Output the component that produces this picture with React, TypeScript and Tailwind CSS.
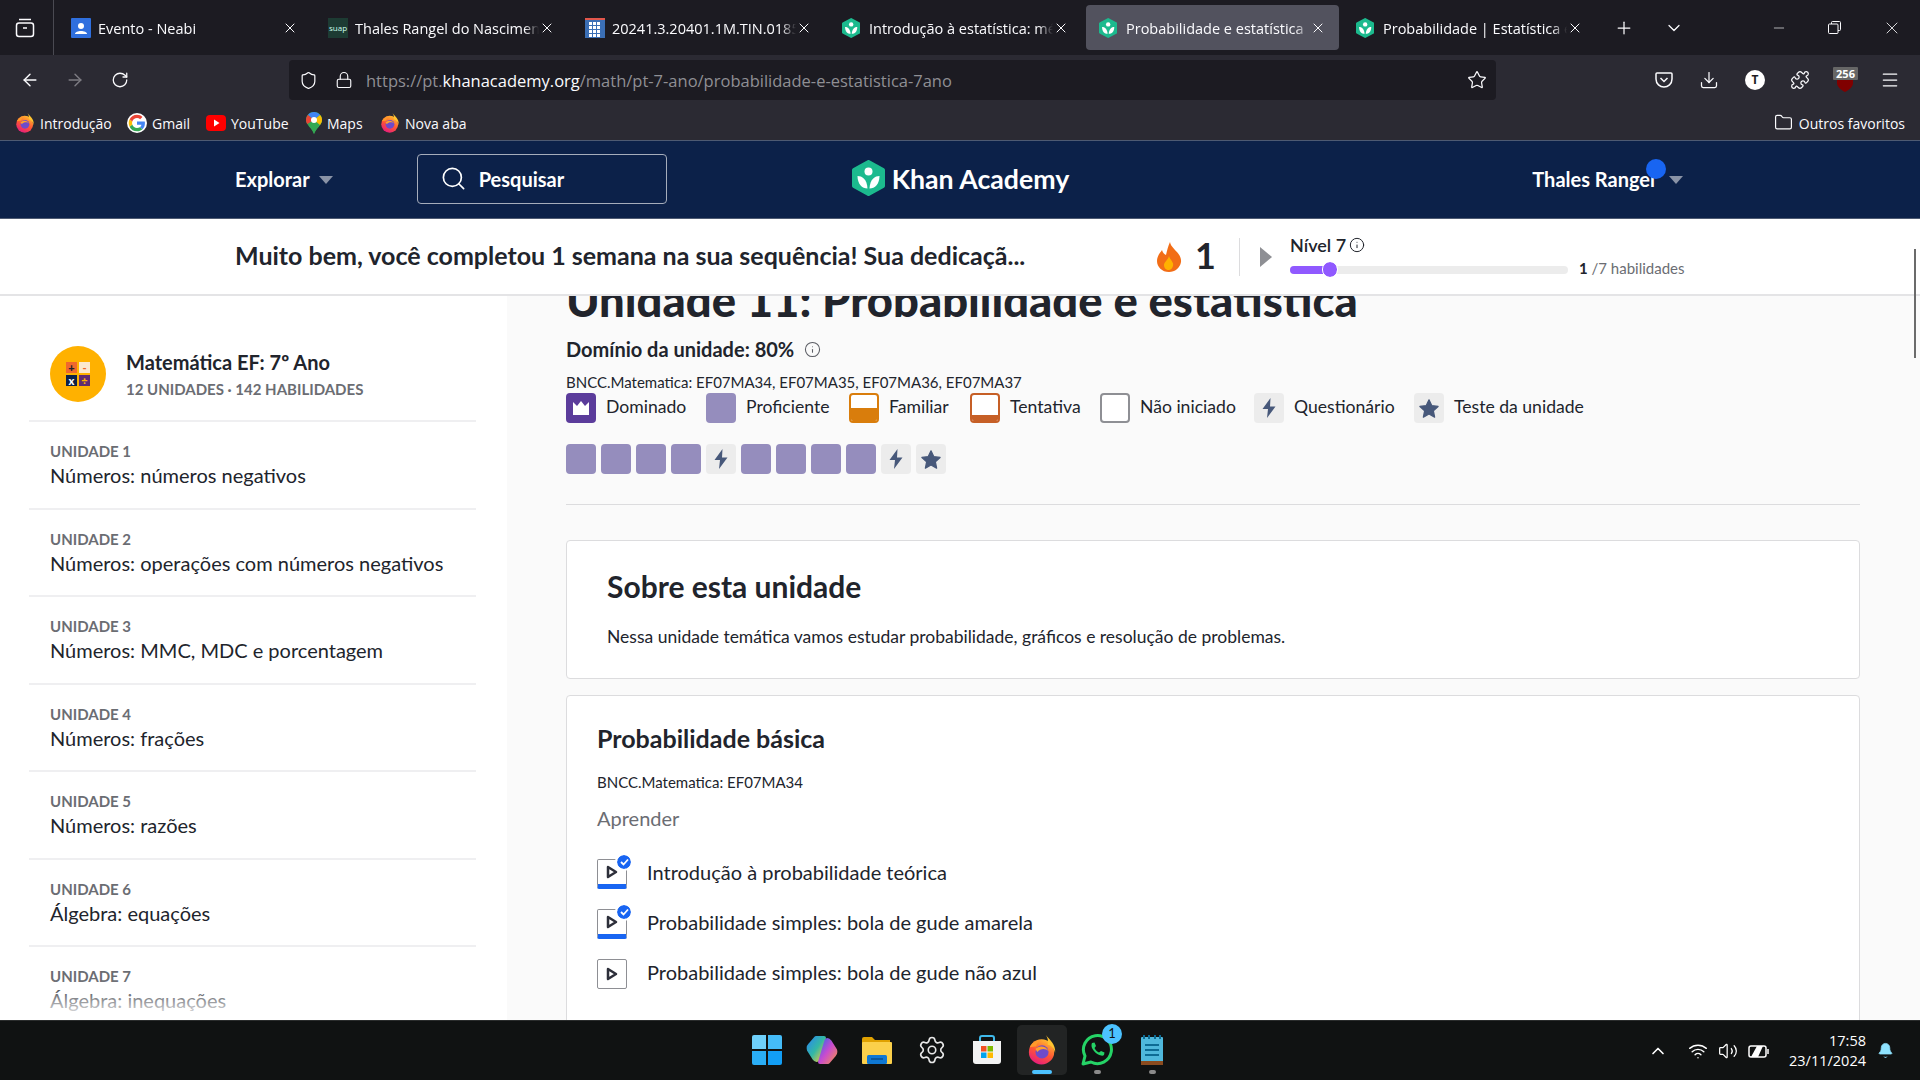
import React from "react";
import { ArrowLeft, ArrowRight, RotateCw, Shield, Lock, Star, Download, Puzzle, Menu, X, Plus, ChevronDown, ChevronUp, Minus, Search, Info, Folder, Wifi, Volume2, Bell, Settings } from "lucide-react";

const Hex = ({ s = 20 }: { s?: number }) => (
  <svg width={(s * 33) / 36} height={s} viewBox="0 0 33 36" className="shrink-0">
    <path d="M16.500 2 L31 10 V26 L16.500 34 L2 26 V10 Z" fill="#1cba8e" stroke="#1cba8e" strokeWidth="4" strokeLinejoin="round" />
    <circle cx="16.500" cy="11.500" r="4" fill="#fff" />
    <path d="M5.500 16 C10 16 15 19 15.500 28.500 C10 28.500 5.500 24 5.500 16 Z" fill="#fff" />
    <path d="M27.500 16 C23 16 18 19 17.500 28.500 C23 28.500 27.500 24 27.500 16 Z" fill="#fff" />
  </svg>
);

const Firefox = ({ s = 20 }: { s?: number }) => (
  <svg width={s} height={s} viewBox="0 0 32 32" className="shrink-0">
    <defs>
      <linearGradient id="ffa" x1="0.7" y1="0" x2="0.2" y2="1">
        <stop offset="0" stopColor="#ffbd2e" />
        <stop offset="0.5" stopColor="#ff5634" />
        <stop offset="1" stopColor="#e31587" />
      </linearGradient>
    </defs>
    <circle cx="15.500" cy="18" r="13.500" fill="url(#ffa)" />
    <path d="M20 0 C24 5 31 10 30 19 C29 14 26 11 22 10 C23 6 22 3 20 0 Z" fill="#ffc430" />
    <path d="M3 13 C5 8 10 5 16 6 C12 7 10 9 10 12 Z" fill="#ff9a2a" />
    <circle cx="16" cy="18" r="7" fill="#6e4bc9" />
    <path d="M9 15 C12 11 20 11 23 17 C20 14 14 14 11 18 Z" fill="#ffa02c" />
  </svg>
);

const Google = () => (
  <svg width="20" height="20" viewBox="0 0 48 48" className="shrink-0">
    <circle cx="24" cy="24" r="24" fill="#fff" />
    <path fill="#4285F4" d="M43 24.500c0-1.400-.1-2.700-.4-4H24v7.600h10.800c-.5 2.500-1.900 4.600-4 6l6.300 4.900C40.800 35.600 43 30.500 43 24.500z" />
    <path fill="#34A853" d="M24 44c5.400 0 9.900-1.800 13.100-4.900l-6.300-4.900c-1.800 1.200-4.100 1.900-6.800 1.900-5.200 0-9.700-3.500-11.300-8.300l-6.500 5C9.500 39.500 16.200 44 24 44z" />
    <path fill="#FBBC05" d="M12.700 27.800c-.8-2.500-.8-5.100 0-7.600l-6.500-5c-2.800 5.500-2.800 12.100 0 17.600z" />
    <path fill="#EA4335" d="M24 12c2.900 0 5.500 1 7.500 2.900l5.600-5.600C33.800 6.100 29.300 4 24 4 16.200 4 9.500 8.500 6.200 15.200l6.500 5C14.300 15.500 18.800 12 24 12z" />
  </svg>
);

const YouTube = () => (
  <svg width="20" height="20" viewBox="0 0 20 20" className="shrink-0">
    <rect x="0" y="2" width="20" height="16" rx="4" fill="#f00" />
    <path d="M8 6.500 L13.500 10 L8 13.500 Z" fill="#fff" />
  </svg>
);

const Maps = () => (
  <svg width="16" height="22" viewBox="0 0 16 22" className="shrink-0">
    <path d="M8 0 C3.500 0 0 3.500 0 8 C0 13 6 16 8 22 C10 16 16 13 16 8 C16 3.500 12.500 0 8 0 Z" fill="#34a853" />
    <path d="M8 0 C5.500 0 3.300 1.100 1.900 2.900 L8 8 L14 3 C12.600 1.100 10.500 0 8 0 Z" fill="#4285f4" />
    <path d="M1.900 2.900 C.7 4.300 0 6 0 8 C0 9.500 .5 10.700 1.200 12 L8 8 Z" fill="#ea4335" />
    <path d="M14 3 L8 8 L3 14 C5 16 7 18.500 8 22 C10 16 16 13 16 8 C16 6 15.300 4.300 14 3 Z" fill="#34a853" />
    <path d="M14 3 C15.300 4.300 16 6 16 8 C16 10 15 11.500 14 13 L8 8 Z" fill="#fbbc04" />
    <circle cx="8" cy="8" r="3" fill="#fff" />
  </svg>
);

const Bookmark = ({ icon, label, w }: { icon: React.ReactNode; label: string; w: string }) => (
  <div className={`flex items-center gap-[5px] ${w}`}>
    {icon}
    <span className="pt-[2px] text-[14px] text-[#fbfbfe] whitespace-nowrap">{label}</span>
  </div>
);

const Tab = ({ icon, title, active }: { icon: React.ReactNode; title: string; active?: boolean }) => (
  <div className={`flex h-[45px] w-[253px] shrink-0 items-center rounded-[4px] pl-[13px] pr-[13px] ${active ? "bg-[#52525e]" : ""}`}>
    <div className="flex w-[27px] shrink-0 items-center">{icon}</div>
    <span className="min-w-0 flex-1 overflow-hidden whitespace-nowrap pt-[2px] text-[14.500px] text-[#fbfbfe] [mask-image:linear-gradient(to_right,black_92%,transparent)]">{title}</span>
    <X size={16} strokeWidth={1.500} className="shrink-0 text-[#fbfbfe]" />
  </div>
);

const TabDoc = () => (
  <svg width="20" height="20" viewBox="0 0 20 20">
    <rect width="20" height="20" fill="#3b6fb5" />
    <g fill="#fff">
      {[4, 8, 12, 16].flatMap((y) => [4, 8, 12].map((x) => <rect key={`${x}-${y}`} x={x} y={y} width="3" height="3" />))}
    </g>
    <rect width="20" height="2" fill="#e2574c" />
  </svg>
);

const Bolt = () => (
  <svg width="14" height="20" viewBox="0 0 14 20">
    <path d="M8.500 0 L0.500 11 H6 L5 20 L13.500 8.500 H8 Z" fill="#47587a" />
  </svg>
);

const StarI = () => (
  <svg width="20" height="19" viewBox="0 0 24 23">
    <path d="M12 1 L15.300 8 L23 9 L17.300 14.300 L18.800 22 L12 18.200 L5.200 22 L6.700 14.300 L1 9 L8.700 8 Z" fill="#47587a" stroke="#47587a" strokeWidth="1.500" strokeLinejoin="round" />
  </svg>
);

const Square = ({ kind }: { kind: "p" | "q" | "t" }) =>
  kind === "p" ? (
    <div className="h-[30px] w-[30px] shrink-0 rounded-[4px] bg-[#958dbd]" />
  ) : kind === "q" ? (
    <div className="flex h-[30px] w-[30px] shrink-0 items-center justify-center rounded-[4px] bg-[#ececec]"><Bolt /></div>
  ) : (
    <div className="flex h-[30px] w-[30px] shrink-0 items-center justify-center rounded-[4px] bg-[#ececec]"><StarI /></div>
  );

const Legend = ({ icon, label, w }: { icon: React.ReactNode; label: string; w: string }) => (
  <div className={`flex shrink-0 items-center gap-[10px] ${w}`}>
    {icon}
    <span className="pb-[1px] text-[17.600px] text-[#21242c] whitespace-nowrap">{label}</span>
  </div>
);

const Lesson = ({ label, done }: { label: string; done?: boolean }) => (
  <div className="flex h-[50px] items-center gap-[20px]">
    <div className={`relative mt-[4px] flex h-[30px] w-[30px] items-center justify-center rounded-[2px] border border-[#8e8f94] bg-white ${done ? "border-b-[5px] border-b-[#1865f2]" : ""}`}>
      <svg width="12" height="14" viewBox="0 0 12 14">
        <path d="M2 2 L10 7 L2 12 Z" fill="none" stroke="#2d2f3a" strokeWidth="2.500" strokeLinejoin="round" />
      </svg>
      {done && (
        <div className="absolute right-[-5px] top-[-5px] flex h-[14px] w-[14px] items-center justify-center rounded-full bg-[#1865f2] outline-2 outline-white">
          <svg width="9" height="8" viewBox="0 0 9 8"><path d="M1 4 L3.500 6.500 L8 1.500" fill="none" stroke="#fff" strokeWidth="1.800" /></svg>
        </div>
      )}
    </div>
    <span className="text-[20px] text-[#21242c]">{label}</span>
  </div>
);

const units = [
  ["UNIDADE 1", "Números: números negativos"],
  ["UNIDADE 2", "Números: operações com números negativos"],
  ["UNIDADE 3", "Números: MMC, MDC e porcentagem"],
  ["UNIDADE 4", "Números: frações"],
  ["UNIDADE 5", "Números: razões"],
  ["UNIDADE 6", "Álgebra: equações"],
  ["UNIDADE 7", "Álgebra: inequações"],
];

const Task = ({ children, active, dot }: { children: React.ReactNode; active?: boolean; dot?: boolean }) => (
  <div className="relative flex h-[50px] w-[55px] items-center justify-center">
    {active && <div className="absolute left-[2.500px] top-0 h-[50px] w-[50px] rounded-[5px] bg-[#222424]" />}
    <div className="relative flex items-center justify-center">{children}</div>
    {active && <div className="absolute bottom-[1px] left-[17px] h-[4px] w-[20px] rounded-full bg-[#4cc2ff]" />}
    {dot && <div className="absolute bottom-[1px] left-[24px] h-[4px] w-[7px] rounded-full bg-[#8a8a8a]" />}
  </div>
);

export default function App() {
  return (
    <div className="relative flex h-[1080px] w-[1920px] flex-col overflow-hidden bg-white [font-family:Lato,sans-serif]">
      {/* Tab strip */}
      <div className="flex h-[55px] shrink-0 items-center bg-[#1c1b22] [font-family:'Open_Sans',sans-serif]">
        <div className="flex h-full w-[54px] shrink-0 items-center justify-center border-r border-[#4a4a52] pr-[4px]">
          <svg width="20" height="20" viewBox="0 0 20 20" fill="none" stroke="#fbfbfe" strokeWidth="1.500">
            <rect x="1.500" y="5" width="17" height="13.500" rx="2.500" />
            <path d="M4 1.500 H16 M8 10 H12" />
          </svg>
        </div>
        <div className="ml-[4px] flex gap-[4px]">
          <Tab title="Evento - Neabi" icon={
            <svg width="20" height="20" viewBox="0 0 20 20"><rect width="20" height="20" rx="1" fill="#2f6fde" /><circle cx="10" cy="8" r="3" fill="#fff" /><path d="M4 16 C4 12 16 12 16 16 Z" fill="#fff" /></svg>
          } />
          <Tab title="Thales Rangel do Nascimento" icon={
            <div className="flex h-[20px] w-[20px] items-center justify-center bg-[#1d3b33] text-[8px] text-[#cfe]">suap</div>
          } />
          <Tab title="20241.3.20401.1M.TIN.0185#" icon={<TabDoc />} />
          <Tab title="Introdução à estatística: média" icon={<Hex />} />
          <Tab active title="Probabilidade e estatística | Matemática" icon={<Hex />} />
          <Tab title="Probabilidade | Estatística e probabilidade" icon={<Hex />} />
        </div>
        <Plus size={20} strokeWidth={1.500} className="ml-[18px] text-[#fbfbfe]" />
        <ChevronDown size={20} strokeWidth={1.500} className="ml-[30px] text-[#fbfbfe]" />
        <div className="flex-1" />
        <Minus size={16} strokeWidth={1} className="mr-[41px] text-[#fbfbfe]" />
        <svg width="13" height="13" viewBox="0 0 13 13" fill="none" stroke="#fbfbfe" className="mr-[41px]"><rect x="0.500" y="3" width="9.500" height="9.500" rx="1" /><path d="M3.500 3 V1.500 Q3.500 .5 4.500 .5 H11.500 Q12.500 .5 12.500 1.500 V8.500 Q12.500 9.500 11.500 9.500 H10" /></svg>
        <X size={20} strokeWidth={1} className="mr-[18px] text-[#fbfbfe]" />
      </div>

      {/* Toolbar */}
      <div className="flex h-[50px] shrink-0 items-center bg-[#2b2a33] [font-family:'Open_Sans',sans-serif]">
        <ArrowLeft size={20} strokeWidth={1.700} className="ml-[20px] text-[#fbfbfe]" />
        <ArrowRight size={20} strokeWidth={1.700} className="ml-[25px] text-[#7d7c83]" />
        <RotateCw size={18} strokeWidth={1.700} className="ml-[26px] text-[#fbfbfe]" />
        <div className="ml-[160px] flex h-[40px] w-[1207px] items-center rounded-[4px] bg-[#1c1b22]">
          <Shield size={19} strokeWidth={1.500} className="ml-[10px] text-[#fbfbfe]" />
          <Lock size={18} strokeWidth={1.500} className="ml-[17px] text-[#fbfbfe]" />
          <span className="ml-[13px] pt-[3px] text-[16.500px] text-[#8f8f94]">https://pt.<span className="text-[#fbfbfe]">khanacademy.org</span>/math/pt-7-ano/probabilidade-e-estatistica-7ano</span>
          <div className="flex-1" />
          <Star size={20} strokeWidth={1.500} className="mr-[9px] text-[#fbfbfe]" />
        </div>
        <div className="flex-1" />
        <svg width="18" height="18" viewBox="0 0 18 18" fill="none" stroke="#fbfbfe" strokeWidth="1.500" className="mr-[26px]"><path d="M2 2 H16 Q17 2 17 3 V8 C17 13 13 16 9 16 C5 16 1 13 1 8 V3 Q1 2 2 2 Z" /><path d="M5.500 7 L9 10.500 L12.500 7" /></svg>
        <Download size={20} strokeWidth={1.500} className="mr-[26px] text-[#fbfbfe]" />
        <div className="mr-[25px] flex h-[20px] w-[20px] items-center justify-center rounded-full bg-white text-[12px] font-bold text-[#1c1b22]">T</div>
        <Puzzle size={20} strokeWidth={1.500} className="mr-[25px] text-[#fbfbfe]" />
        <div className="relative mr-[25px] h-[24px] w-[20px]">
          <svg width="18" height="20" viewBox="0 0 18 20" className="absolute left-[1px] top-[4px]"><path d="M9 0 L17 2 V11 C17 15 13 18 9 20 C5 18 1 15 1 11 V2 Z" fill="#800000" /></svg>
          <div className="absolute left-[-2px] top-[-1px] h-[13px] w-[25px] rounded-[1px] bg-[#666] text-center text-[11px] font-bold leading-[13px] text-white">256</div>
        </div>
        <Menu size={20} strokeWidth={1.500} className="mr-[20px] text-[#fbfbfe]" />
      </div>

      {/* Bookmarks */}
      <div className="flex h-[35px] shrink-0 items-center bg-[#2b2a33] pl-[15px] [font-family:'Open_Sans',sans-serif]">
        <Bookmark w="w-[112px]" icon={<Firefox />} label="Introdução" />
        <Bookmark w="w-[79px]" icon={<Google />} label="Gmail" />
        <Bookmark w="w-[100px]" icon={<YouTube />} label="YouTube" />
        <Bookmark w="w-[74px]" icon={<Maps />} label="Maps" />
        <Bookmark w="w-[100px]" icon={<Firefox />} label="Nova aba" />
        <div className="flex-1" />
        <Folder size={19} strokeWidth={1.500} className="text-[#fbfbfe]" />
        <span className="ml-[6px] mr-[15px] pt-[2px] text-[14px] text-[#fbfbfe]">Outros favoritos</span>
      </div>

      {/* KA header */}
      <div className="relative flex h-[79px] shrink-0 items-center border-y border-y-[#4e5a72] bg-[#0c2149] pb-[2px] pl-[235px] pr-[237px] text-white">
        <span className="text-[20px] font-bold">Explorar</span>
        <div className="ml-[9px] mt-[2px] h-0 w-0 border-x-[7px] border-t-[8px] border-x-transparent border-t-[#8a93a6]" />
        <div className="ml-[84px] flex h-[50px] w-[250px] items-center rounded-[4px] border border-[#a6adbb] pl-[22px]">
          <Search size={27} strokeWidth={1.500} />
          <span className="ml-[12px] text-[20px] font-bold">Pesquisar</span>
        </div>
        <div className="ml-[185px] flex items-center gap-[7px]">
          <Hex s={36} />
          <span className="pt-[2px] text-[26.700px] font-bold">Khan Academy</span>
        </div>
        <div className="flex-1" />
        <div className="relative flex items-center">
          <span className="text-[20px] font-bold">Thales Rangel</span>
          <div className="absolute left-[114px] top-[-5px] h-[20px] w-[20px] rounded-full bg-[#1865f2]" />
          <div className="ml-[14px] mt-[2px] h-0 w-0 border-x-[7px] border-t-[8px] border-x-transparent border-t-[#8a93a6]" />
        </div>
      </div>

      {/* Streak bar */}
      <div className="flex h-[77px] shrink-0 items-center border-b-2 border-b-[#e4e4e6] bg-white pl-[235px] text-[#21242c]">
        <span className="w-[921px] pb-[2px] text-[25px] font-bold">Muito bem, você completou 1 semana na sua sequência! Sua dedicaçã...</span>
        <svg width="26" height="30" viewBox="0 0 26 30"><path d="M14 0 C15 7 26 11 25 20 C24 26 19 30 13 30 C6 30 1 25 1 19 C1 14 4 11 6 8 C7 11 8 12 10 13 C11 9 12 4 14 0 Z" fill="#f26d16" /><path d="M13 14 C14 18 18 20 17 24 C16 27 14 28 13 28 C10 28 8 26 8 23 C8 20 12 18 13 14 Z" fill="#ffb100" /></svg>
        <span className="ml-[13px] w-[44px] pb-[4px] text-[36px] font-bold leading-none">1</span>
        <div className="h-[38px] w-px bg-[#dcdcde]" />
        <div className="ml-[20px] h-0 w-0 border-y-[10px] border-l-[12px] border-y-transparent border-l-[#8e8f94]" />
        <div className="ml-[18px] flex flex-col pt-[3px]">
          <div className="flex items-center gap-[3px]">
            <span className="text-[18px] font-semibold leading-[22px]">Nível 7</span>
            <Info size={16} strokeWidth={1.500} />
          </div>
          <div className="mt-[1px] flex items-center">
            <div className="relative h-[8px] w-[278px] rounded-full bg-[#ececec]">
              <div className="h-[8px] w-[38px] rounded-l-full bg-[#9059ff]" />
              <div className="absolute left-[33px] top-[-4px] h-[15px] w-[14px] rounded-full bg-[#9059ff] outline outline-white" />
            </div>
            <span className="ml-[11px] pb-[2px] text-[15px] text-[#6b6d73]"><b className="text-[#21242c]">1</b> /7 habilidades</span>
          </div>
        </div>
      </div>

      {/* Body */}
      <div className="relative flex min-h-0 flex-1 overflow-hidden">
        <aside className="relative w-[507px] shrink-0 overflow-hidden bg-white">
          <div className="flex h-[124px] items-center pl-[50px] pt-[31px]">
            <div className="flex h-[56px] w-[56px] items-center justify-center rounded-full bg-[#ffb100]">
              <div className="grid grid-cols-2 gap-[2px] text-center text-[11px] font-black leading-[11px]">
                <div className="h-[11px] w-[11px] bg-[#f0682d] text-[#21242c]">+</div>
                <div className="h-[11px] w-[11px] bg-[#fbe8d0] text-[#f0682d]">-</div>
                <div className="h-[11px] w-[11px] bg-[#0c2149] text-white">x</div>
                <div className="h-[11px] w-[11px] bg-[#5f2a70] text-[#ffb100]">÷</div>
              </div>
            </div>
            <div className="ml-[20px] flex flex-col">
              <span className="text-[20px] font-bold leading-[26px] text-[#21242c]">Matemática EF: 7º Ano</span>
              <span className="mt-[4px] text-[15px] font-bold leading-[20px] text-[#6b6d73]">12 UNIDADES · 142 HABILIDADES</span>
            </div>
          </div>
          <div className="ml-[29px] mr-[31px] flex flex-col">
            {units.map(([a, b]) => (
              <div key={a} className="h-[87.500px] border-t-2 border-t-[#efeff1] pl-[21px] pt-[19px]">
                <div className="text-[15px] font-bold leading-[20px] text-[#6b6d73]">{a}</div>
                <div className="mt-[1px] text-[20px] leading-[26px] text-[#21242c]">{b}</div>
              </div>
            ))}
          </div>
          <div className="absolute inset-x-0 bottom-0 h-[40px] bg-gradient-to-b from-transparent to-white" />
        </aside>

        <main className="min-w-0 flex-1 overflow-hidden bg-[#fafafa] pl-[59px] pr-[60px]">
          <div className="mt-[-23px]">
            <h1 className="whitespace-nowrap text-[45.400px] font-black leading-[54px] text-[#21242c]">Unidade 11: Probabilidade e estatística</h1>
            <div className="mt-[6px] flex h-[32px] items-center gap-[10px]">
              <span className="text-[20px] font-bold text-[#21242c]">Domínio da unidade: 80%</span>
              <Info size={17} strokeWidth={1.500} className="text-[#5b5d64]" />
            </div>
            <div className="mt-[7px] text-[15px] leading-[20px] text-[#21242c]">BNCC.Matematica: EF07MA34, EF07MA35, EF07MA36, EF07MA37</div>
            <div className="mt-[1px] flex h-[30px] items-center">
              <Legend w="w-[140px]" label="Dominado" icon={
                <div className="flex h-[30px] w-[30px] shrink-0 items-center justify-center rounded-[4px] bg-[#5b3c9b]">
                  <svg width="18" height="14" viewBox="0 0 18 14"><path d="M1 1 L5 5 L9 0 L13 5 L17 1 V14 H1 Z" fill="#fff" /></svg>
                </div>
              } />
              <Legend w="w-[143px]" label="Proficiente" icon={<div className="h-[30px] w-[30px] shrink-0 rounded-[4px] bg-[#958dbd]" />} />
              <Legend w="w-[121px]" label="Familiar" icon={
                <div className="flex h-[30px] w-[30px] shrink-0 flex-col justify-end overflow-hidden rounded-[4px] border-2 border-[#d97d0c] bg-white"><div className="h-[13px] bg-[#d97d0c]" /></div>
              } />
              <Legend w="w-[130px]" label="Tentativa" icon={
                <div className="flex h-[30px] w-[30px] shrink-0 flex-col justify-end overflow-hidden rounded-[4px] border-2 border-[#c65f26] bg-white"><div className="h-[6px] bg-[#c65f26]" /></div>
              } />
              <Legend w="w-[154px]" label="Não iniciado" icon={<div className="h-[30px] w-[30px] shrink-0 rounded-[4px] border-2 border-[#8e8f94] bg-white" />} />
              <Legend w="w-[160px]" label="Questionário" icon={<Square kind="q" />} />
              <Legend w="w-[180px]" label="Teste da unidade" icon={<Square kind="t" />} />
            </div>
            <div className="mt-[21px] flex gap-[5px]">
              {(["p", "p", "p", "p", "q", "p", "p", "p", "p", "q", "t"] as const).map((k, i) => (
                <Square key={i} kind={k} />
              ))}
            </div>
            <div className="mt-[30px] h-px bg-[#dcdcde]" />

            <section className="mt-[35px] h-[139px] rounded-[4px] border border-[#dcdcde] bg-white pl-[40px] pt-[27px]">
              <h2 className="text-[30px] font-bold leading-[36px] text-[#21242c]">Sobre esta unidade</h2>
              <p className="mt-[21px] text-[17.500px] leading-[24px] text-[#21242c]">Nessa unidade temática vamos estudar probabilidade, gráficos e resolução de problemas.</p>
            </section>

            <section className="mt-[16px] rounded-[4px] border border-[#dcdcde] bg-white pb-[40px] pl-[30px] pt-[27px]">
              <h3 className="text-[25px] font-bold leading-[30px] text-[#21242c]">Probabilidade básica</h3>
              <div className="mt-[19px] text-[15px] leading-[20px] text-[#21242c]">BNCC.Matematica: EF07MA34</div>
              <div className="mt-[13px] text-[20px] leading-[26px] text-[#6b6d73]">Aprender</div>
              <div className="mt-[16px] flex flex-col">
                <Lesson done label="Introdução à probabilidade teórica" />
                <Lesson done label="Probabilidade simples: bola de gude amarela" />
                <Lesson label="Probabilidade simples: bola de gude não azul" />
              </div>
            </section>
          </div>
        </main>
      </div>

      {/* Scrollbar thumb over the page */}
      <div className="absolute right-[4px] top-[249px] h-[109px] w-[2px] bg-[#6b6b6b]" />

      {/* Taskbar */}
      <div className="relative flex h-[60px] shrink-0 items-center justify-center border-t border-t-[#2a2c2c] bg-[#101212] pb-[1px]">
        <div className="ml-[-1px] flex items-center">
          <Task>
            <div className="grid grid-cols-2 gap-[2px]">
              <div className="h-[14px] w-[14px] rounded-tl-[2px] bg-[#6fd0fb]" />
              <div className="h-[14px] w-[14px] rounded-tr-[2px] bg-[#45bcf8]" />
              <div className="h-[14px] w-[14px] rounded-bl-[2px] bg-[#2aaef6]" />
              <div className="h-[14px] w-[14px] rounded-br-[2px] bg-[#129ef5]" />
            </div>
          </Task>
          <Task>
            <svg width="32" height="30" viewBox="0 0 32 30">
              <defs>
                <linearGradient id="co1" x1="0" y1="0" x2="1" y2="1"><stop offset="0" stopColor="#2a8ce8" /><stop offset="0.5" stopColor="#33b8a5" /><stop offset="1" stopColor="#f5c83a" /></linearGradient>
                <linearGradient id="co2" x1="0" y1="0" x2="1" y2="1"><stop offset="0" stopColor="#3b66e8" /><stop offset="0.5" stopColor="#c84bd0" /><stop offset="1" stopColor="#f08a5a" /></linearGradient>
              </defs>
              <path d="M10 3 H18 L12 23 Q11 27 8 23 L3 15 Q2 12 4 10 Z" fill="url(#co1)" stroke="url(#co1)" strokeWidth="4" strokeLinejoin="round" />
              <path d="M22 27 H14 L20 7 Q21 3 24 7 L29 15 Q30 18 28 20 Z" fill="url(#co2)" stroke="url(#co2)" strokeWidth="4" strokeLinejoin="round" />
            </svg>
          </Task>
          <Task>
            <svg width="30" height="27" viewBox="0 0 30 27">
              <path d="M0 2 Q0 0 2 0 H10 L13 3 H28 V8 H0 Z" fill="#e0a100" />
              <rect x="0" y="5" width="30" height="22" rx="1" fill="#fbd04b" />
              <rect x="5" y="18" width="20" height="9" rx="1.500" fill="#0f78d4" />
              <path d="M9 22 H21" stroke="#0a4e8c" strokeWidth="1.500" />
            </svg>
          </Task>
          <Task><Settings size={30} strokeWidth={1.300} className="text-[#e8e8e8]" /></Task>
          <Task>
            <svg width="30" height="30" viewBox="0 0 30 30">
              <path d="M8 8 V3 Q8 1 10 1 H20 Q22 1 22 3 V8" fill="none" stroke="#3fb9ea" strokeWidth="2" />
              <path d="M1 6 H29 V26 Q29 29 26 29 H4 Q1 29 1 26 Z" fill="#f3f3f3" />
              <rect x="9" y="11" width="5.500" height="5.500" fill="#f25022" /><rect x="15.500" y="11" width="5.500" height="5.500" fill="#7fba00" /><rect x="9" y="17.500" width="5.500" height="5.500" fill="#00a4ef" /><rect x="15.500" y="17.500" width="5.500" height="5.500" fill="#ffb900" />
            </svg>
          </Task>
          <Task active><Firefox s={30} /></Task>
          <Task dot>
            <svg width="32" height="32" viewBox="0 0 32 32">
              <path d="M2 30 L4 22 A14 14 0 1 1 10 28 Z" fill="none" stroke="#25d366" strokeWidth="3" strokeLinejoin="round" />
              <path d="M11 9 L13.500 8.500 L15 12 L13.500 14 C14.500 16 16 17.500 18 18.500 L20 17 L23.500 18.500 L23 21 C20 24 8 16 11 9 Z" fill="#25d366" />
            </svg>
            <div className="absolute right-[-9px] top-[-10px] flex h-[20px] w-[20px] items-center justify-center rounded-full bg-[#4cc2ff] text-[13px] text-[#101212]">1</div>
          </Task>
          <Task dot>
            <svg width="22" height="30" viewBox="0 0 22 30">
              <rect x="0" y="2" width="22" height="26" rx="1" fill="#4fb8dc" />
              <rect x="0" y="26" width="22" height="4" fill="#8a4b1f" />
              <path d="M4 10 H18 M4 15 H18 M4 20 H18" stroke="#0d6b94" strokeWidth="2" />
              <path d="M3 0 V4 M8 0 V4 M14 0 V4 M19 0 V4" stroke="#0d6b94" strokeWidth="2" />
            </svg>
          </Task>
        </div>
        <div className="absolute right-[26px] top-0 flex h-full items-center text-white [font-family:'Open_Sans',sans-serif]">
          <ChevronUp size={20} strokeWidth={2} className="mr-[20px]" />
          <Wifi size={20} strokeWidth={1.700} className="mr-[10px]" />
          <Volume2 size={20} strokeWidth={1.500} className="mr-[10px]" />
          <svg width="21" height="16" viewBox="0 0 21 16" fill="none" stroke="#fff" strokeWidth="1.500" className="mr-[20px]"><rect x="1" y="3" width="17" height="11" rx="2" /><path d="M20 6 V11" /><path d="M3 14 L9 3 H15 L10 14 Z" fill="#fff" stroke="none" /></svg>
          <div className="mr-[1px] flex flex-col items-end text-[14.500px] leading-[20px]">
            <span>17:58</span>
            <span>23/11/2024</span>
          </div>
          <Bell size={17} fill="#8fe3ff" strokeWidth={1} className="ml-[10px] text-[#8fe3ff]" />
        </div>
      </div>
    </div>
  );
}
